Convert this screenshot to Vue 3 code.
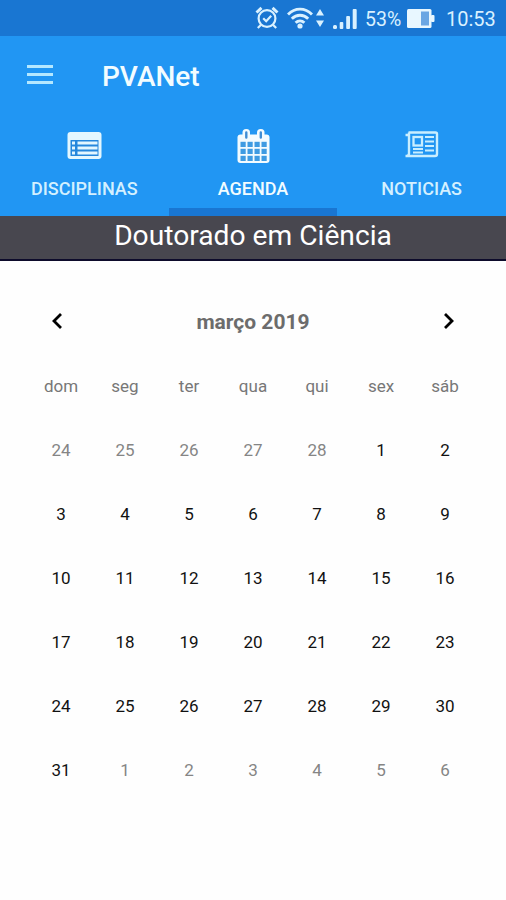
<template>
  <div class="app">
    <div class="status-bar">
      <svg class="alarm" width="24" height="24" viewBox="0 0 24 24" fill="none" stroke="#d9f1ff" stroke-width="2.2">
        <circle cx="12" cy="12.5" r="8.4" />
        <path d="M8.2 12.2l3 3 5-5.4" />
        <path d="M1.5 6.5l5-4.6M22.5 6.5l-5-4.6" stroke-width="3" />
        <path d="M5.8 19l-3 3M18.2 19l3 3" />
      </svg>
      <svg class="wifi" width="26" height="22" viewBox="0 0 26 22" fill="none" stroke="#d9f1ff" stroke-width="2.9">
        <path d="M1 7.5C8 .3 18 .3 25 7.5" />
        <path d="M4.8 11.8c4.8-4.8 11.6-4.8 16.4 0" />
        <path d="M8.6 15.8c2.6-2.5 6.2-2.5 8.8 0" />
        <circle cx="13" cy="19" r="2.6" fill="#d9f1ff" stroke="none" />
      </svg>
      <svg class="arrows" width="8" height="18" viewBox="0 0 8 18" fill="#d9f1ff">
        <path d="M4 0l4 6.5H0zM4 18l4-6.5H0z" />
      </svg>
      <svg class="signal" width="24" height="20" viewBox="0 0 24 20" fill="#d9f1ff">
        <rect x="0" y="16" width="4" height="4" rx="1.5" />
        <rect x="6.7" y="13" width="3.6" height="7" rx="1" />
        <rect x="13.2" y="7" width="3.8" height="13" rx="1" />
        <rect x="19.7" y="0" width="4" height="20" rx="1" />
      </svg>
      <span class="percent">53%</span>
      <svg class="battery" width="28" height="19" viewBox="0 0 28 19">
        <rect x="0" y="0" width="24.5" height="19" rx="1.5" fill="#e8f7ff" />
        <rect x="14" y="2.5" width="8" height="14" fill="#6aa6e3" />
        <rect x="24" y="6" width="3.5" height="7" rx="1" fill="#e8f7ff" />
      </svg>
      <span class="clock">10:53</span>
    </div>

    <header class="toolbar">
      <button class="menu" aria-label="Menu">
        <span></span>
        <span></span>
        <span></span>
      </button>
      <h1>PVANet</h1>
    </header>

    <nav class="tabs">
      <div
        v-for="tab in tabs"
        :key="tab.id"
        class="tab"
        :class="{ active: tab.id === activeTab }"
        @click="activeTab = tab.id"
      >
        <svg v-if="tab.id === 'disciplinas'" width="36" height="36" viewBox="0 0 36 36">
          <rect x="1.5" y="4" width="34" height="27" rx="3" fill="#e3f7ff" />
          <path d="M4.500 12h28v16h-28z" fill="#2587dc" />
          <path
            d="M6 13.500h3v3H6zM6 18.500h3v3H6zM6 23.500h3v3H6zM11.500 13.500h20v3h-20zM11.500 18.500h20v3h-20zM11.500 23.500h20v3h-20z"
            fill="#e3f7ff"
          />
        </svg>
        <svg v-else-if="tab.id === 'agenda'" width="36" height="36" viewBox="0 0 36 36">
          <rect x="2.5" y="6.5" width="32" height="28.5" rx="3" fill="#f2fbff" />
          <rect x="7.5" y="1" width="7.5" height="11" rx="3.5" fill="#f2fbff" />
          <rect x="22" y="1" width="7.5" height="11" rx="3.5" fill="#f2fbff" />
          <path d="M11.3 4.5v5M25.8 4.5v5" stroke="#3f8dd4" stroke-width="2.4" stroke-linecap="round" />
          <template v-for="row in 3" :key="row">
            <rect
              v-for="col in 4"
              :key="col"
              :x="-1.5 + col * 7"
              :y="6.8 + row * 7"
              width="5.2"
              height="5.2"
              fill="#3e9be2"
            />
          </template>
        </svg>
        <svg v-else width="36" height="36" viewBox="0 0 36 36" fill="none" stroke="#c9eeff">
          <path d="M1.5 7h4M4.5 4.500h27q1.500 0 1.500 1.500v20q0 2-2 2H1.500M5 4.500v21q0 2-2 2.500" stroke-width="2.4" />
          <rect x="9.5" y="9" width="8.5" height="8.5" stroke-width="2.3" />
          <path d="M21 9h9M21 13.500h9M21 18h9M9 21h10M21 22.500h9M9 24.500h10" stroke-width="2" />
        </svg>
        <span class="label">{{ tab.label }}</span>
      </div>
    </nav>

    <div class="course">Doutorado em Ciência</div>

    <section class="calendar">
      <div class="month">
        <button aria-label="Mês anterior">
          <svg width="12" height="18" viewBox="0 0 12 18" fill="none" stroke="#000" stroke-width="2.8">
            <path d="M10 2L3 9l7 7" />
          </svg>
        </button>
        <h2>março 2019</h2>
        <button aria-label="Próximo mês">
          <svg width="12" height="18" viewBox="0 0 12 18" fill="none" stroke="#000" stroke-width="2.8">
            <path d="M2 2l7 7-7 7" />
          </svg>
        </button>
      </div>
      <div class="grid">
        <div v-for="name in weekdays" :key="name" class="cell weekday">{{ name }}</div>
        <div v-for="(day, i) in days" :key="i" class="cell" :class="{ outside: day.outside }">
          {{ day.number }}
        </div>
      </div>
    </section>
  </div>
</template>

<script setup>
import { computed, ref } from 'vue'

const tabs = [
  { id: 'disciplinas', label: 'DISCIPLINAS' },
  { id: 'agenda', label: 'AGENDA' },
  { id: 'noticias', label: 'NOTICIAS' },
]
const activeTab = ref('agenda')

const weekdays = ['dom', 'seg', 'ter', 'qua', 'qui', 'sex', 'sáb']
const year = 2019
const month = 2

// six full weeks, starting on the sunday before the 1st
const days = computed(() => {
  const offset = new Date(year, month, 1).getDay()
  return Array.from({ length: 42 }, (_, i) => {
    const date = new Date(year, month, 1 - offset + i)
    return { number: date.getDate(), outside: date.getMonth() !== month }
  })
})
</script>

<style>
body {
  margin: 0;
  background: #fefefe;
}
</style>

<style scoped>
.app {
  width: 506px;
  height: 900px;
  overflow: hidden;
  background: #fefefe;
  font-family: Roboto, sans-serif;
}
button {
  padding: 0;
  border: 0;
  background: none;
}
.status-bar {
  display: flex;
  align-items: center;
  box-sizing: border-box;
  height: 36px;
  padding-left: 255px;
  background: #1976d2;
  color: #d9f1ff;
  font-size: 20px;
  white-space: nowrap;
}
.wifi {
  margin-left: 8px;
}
.arrows {
  margin-left: 3px;
}
.signal {
  margin-left: 9px;
  margin-top: 2px;
}
.percent {
  width: 36px;
  margin-left: 8px;
  padding-top: 3px;
  font-size: 19.5px;
}
.battery {
  margin-left: 6px;
}
.clock {
  margin-left: 11px;
  padding-top: 2px;
}
.toolbar {
  display: flex;
  align-items: center;
  height: 80px;
  background: #2196f3;
}
.menu {
  display: flex;
  flex-direction: column;
  gap: 5px;
  width: 26px;
  margin-left: 27px;
  margin-top: -3px;
}
.menu span {
  height: 3px;
  background: #b5e8ff;
}
h1 {
  margin: 1px 0 0 49px;
  color: #f2fcff;
  font-size: 28px;
  font-weight: 500;
}
.tabs {
  display: flex;
  height: 100px;
  background: #2196f3;
}
.tab {
  display: flex;
  flex: 1;
  flex-direction: column;
  align-items: center;
  box-sizing: border-box;
  padding-top: 12px;
  border-bottom: 8px solid transparent;
  color: #d3f0ff;
}
.tab.active {
  border-bottom-color: #1976d2;
  color: #f2fcff;
}
.label {
  margin-top: 14px;
  font-size: 18px;
  font-weight: 500;
  line-height: 22px;
}
.course {
  box-sizing: border-box;
  height: 45px;
  border-bottom: 2px solid #0d0b2b;
  background: #48474f;
  color: #fff;
  font-size: 28.2px;
  line-height: 40px;
  text-align: center;
}
.calendar {
  padding: 28px 29px 0;
}
.month {
  display: flex;
  align-items: center;
  justify-content: space-between;
  height: 64px;
}
.month button {
  display: flex;
  justify-content: center;
  width: 56px;
}
h2 {
  margin: 1px 0 0;
  color: #6c6c6c;
  font-size: 21px;
  font-weight: 700;
}
.grid {
  display: grid;
  grid-template-columns: repeat(7, 64px);
  grid-auto-rows: 64px;
}
.cell {
  display: flex;
  align-items: center;
  justify-content: center;
  padding-top: 1px;
  color: #111;
  font-size: 17px;
}
.cell.weekday {
  color: #777;
}
.cell.outside {
  color: #858585;
}
</style>
